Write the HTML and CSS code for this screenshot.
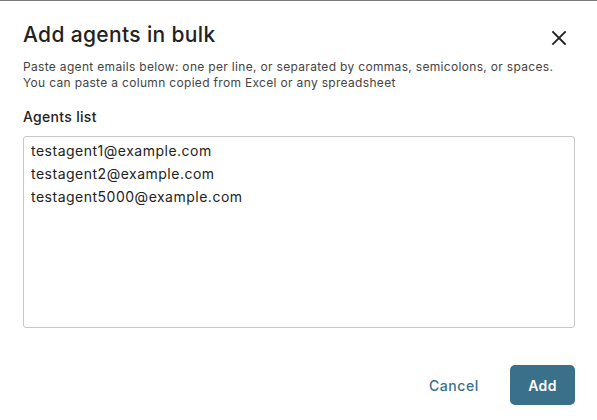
FILE: index.html
```html
<!DOCTYPE html>
<html lang="en">
<head>
<meta charset="utf-8">
<title>Add agents in bulk</title>
<link rel="stylesheet" href="styles.css">
</head>
<body>
<div class="dialog">
  <div class="header">
    <h1 class="title">Add agents in bulk</h1>
    <button class="close" aria-label="Close">
      <svg width="16" height="16" viewBox="0 0 16 16"><path d="M2 2L14 14M14 2L2 14" stroke="#222" stroke-width="1.8" stroke-linecap="square" fill="none"/></svg>
    </button>
  </div>
  <p class="desc">Paste agent emails below: one per line, or separated by commas, semicolons, or spaces.<br>You can paste a column copied from Excel or any spreadsheet</p>
  <label class="label" for="agents">Agents list</label>
  <textarea id="agents" class="list">testagent1@example.com
testagent2@example.com
testagent5000@example.com</textarea>
  <div class="actions">
    <button class="btn-cancel">Cancel</button>
    <button class="btn-add">Add</button>
  </div>
</div>
</body>
</html>
```
FILE: styles.css
```css
html, body {
  margin: 0;
  padding: 0;
  background: #fff;
}
body {
  font-family: "Inter", "Open Sans", sans-serif;
  color: #222;
  border-top: 1px solid #7a7a7a;
}
.dialog {
  padding: 0 22px 0 23px;
  display: flex;
  flex-direction: column;
}
.header {
  display: flex;
  align-items: center;
  justify-content: space-between;
  padding-top: 14px;
  height: 40px;
}
.title {
  margin: 0;
  font-size: 21px;
  font-weight: 500;
  line-height: 28px;
  letter-spacing: 0.35px;
  color: #222;
}
.close {
  border: 0;
  background: none;
  padding: 0;
  margin: 6px 8px 0 0;
  width: 16px;
  height: 16px;
  display: flex;
}
.desc {
  margin: 4px 0 0;
  font-size: 12px;
  line-height: 16px;
  letter-spacing: 0.32px;
  color: #444;
}
.label {
  margin-top: 16px;
  font-size: 14px;
  line-height: 20px;
  font-weight: 500;
  letter-spacing: 0.3px;
  color: #222;
}
.list {
  margin-top: 9px;
  height: 192px;
  box-sizing: border-box;
  border: 1px solid #c8c8c8;
  border-radius: 3px;
  padding: 2px 7px;
  font-family: inherit;
  font-size: 14px;
  line-height: 23px;
  letter-spacing: 0.5px;
  color: #222;
  resize: none;
  outline: none;
}
.actions {
  display: flex;
  justify-content: flex-end;
  align-items: center;
  gap: 31px;
  margin-top: 37px;
}
.btn-cancel {
  border: 0;
  background: none;
  font-family: inherit;
  font-size: 14px;
  font-weight: 500;
  letter-spacing: 0.6px;
  color: #3a7089;
  padding: 0;
}
.btn-add {
  width: 65px;
  height: 40px;
  border: 0;
  border-radius: 5px;
  background: #3a7089;
  color: #fff;
  font-family: inherit;
  font-size: 14px;
  font-weight: 600;
  letter-spacing: 0.4px;
}
```
